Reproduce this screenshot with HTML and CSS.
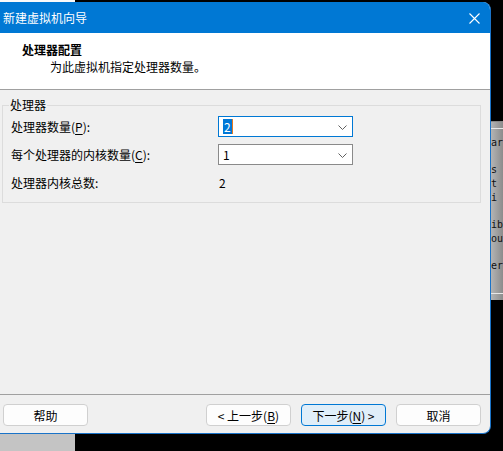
FILE: index.html
```html
<!DOCTYPE html>
<html lang="zh-CN">
<head>
    <meta charset="UTF-8">
    <meta name="viewport" content="width=device-width, initial-scale=1.0">
    <title>新建虚拟机向导</title>
    <link rel="stylesheet" href="styles.css">
</head>
<body>
    <div class="desktop">
        <div class="dialog">
            <div class="titlebar">
                <span class="title">新建虚拟机向导</span>
                <svg class="close" width="11" height="11" viewBox="0 0 11 11">
                    <path d="M0.5 0.5 L10.5 10.5 M10.5 0.5 L0.5 10.5" stroke="#fff" stroke-width="1.1" fill="none"/>
                </svg>
            </div>

            <div class="header">
                <h1>处理器配置</h1>
                <p>为此虚拟机指定处理器数量。</p>
            </div>

            <div class="content">
                <fieldset class="group">
                    <legend>处理器</legend>
                    <div class="form-grid">
                        <label>处理器数量(<u>P</u>):</label>
                        <div class="combo focused">
                            <span class="value"><span class="selected">2</span><span class="caret"></span></span>
                            <svg class="arrow" width="9" height="5" viewBox="0 0 9 5"><path d="M0.5 0.5 L4.5 4.5 L8.5 0.5" stroke="#606060" fill="none"/></svg>
                        </div>

                        <label>每个处理器的内核数量(<u>C</u>):</label>
                        <div class="combo">
                            <span class="value">1</span>
                            <svg class="arrow" width="9" height="5" viewBox="0 0 9 5"><path d="M0.5 0.5 L4.5 4.5 L8.5 0.5" stroke="#606060" fill="none"/></svg>
                        </div>

                        <label>处理器内核总数:</label>
                        <span class="total">2</span>
                    </div>
                </fieldset>
            </div>

            <div class="footer">
                <button class="btn">帮助</button>
                <span class="spacer"></span>
                <button class="btn">&lt;&nbsp;上一步(<u>B</u>)</button>
                <button class="btn default">下一步(<u>N</u>)&nbsp;&gt;</button>
                <button class="btn">取消</button>
            </div>
        </div>

        <!-- window peeking out behind the dialog -->
        <div class="behind">
            <div class="behind-panel">
                <span>ar</span>
                <span class="gap">s</span>
                <span>t i</span>
                <span class="gap">ib</span>
                <span>ou</span>
                <span class="gap">er</span>
            </div>
        </div>
    </div>
</body>
</html>
```

FILE: styles.css
```css
body {
    margin: 0;
    font-family: "Noto Sans CJK SC", "Microsoft YaHei", sans-serif;
    font-size: 12px;
    background:
        linear-gradient(#fafafa 0 2px, #c4c4c4 2px) left top / 75px 100% no-repeat,
        #000;
    width: 503px;
    height: 451px;
    overflow: hidden;
}
.desktop {
    display: flex;
    align-items: flex-start;
}
.dialog {
    width: 491px;
    height: 431px;
    margin-top: 2px;
    background: #f0f0f0;
    border-right: 1px solid #1a73c8;
    border-bottom: 1px solid #1a73c8;
    border-radius: 0 8px 8px 0;
    overflow: hidden;
    display: flex;
    flex-direction: column;
}
.titlebar {
    height: 31px;
    background: #0078d4;
    color: #fff;
    display: flex;
    align-items: center;
    justify-content: space-between;
    padding: 0 10px 0 3px;
    font-size: 12px;
}
.close {
    margin-top: 1px;
}
.header {
    height: 57px;
    box-sizing: border-box;
    background: #fff;
    border-bottom: 1px solid #a0a0a0;
    padding-top: 9px;
}
.header h1 {
    margin: 0 0 0 22px;
    font-size: 12px;
    line-height: 16px;
    font-weight: bold;
}
.header p {
    margin: 1px 0 0 50px;
    line-height: 16px;
}
.content {
    flex: 1;
    padding: 7px 9px 0 2px;
    border-bottom: 1px solid #a0a0a0;
}
.group {
    margin: 0;
    padding: 0 8px 9px 8px;
    border: 1px solid #dcdcdc;
    min-width: 0;
}
.group legend {
    padding: 0 1px;
    margin-left: -2px;
    line-height: 16px;
    color: #000;
}
.form-grid {
    display: grid;
    grid-template-columns: 207px 135px;
    grid-auto-rows: 21px;
    row-gap: 7px;
    align-items: center;
    margin-top: 3px;
}
.form-grid label {
    line-height: 21px;
}
.form-grid u {
    text-underline-offset: 2px;
}
.combo {
    height: 21px;
    box-sizing: border-box;
    border: 1px solid #8a8a8a;
    background: #fff;
    display: flex;
    align-items: center;
    justify-content: space-between;
    padding: 0 5px 0 4px;
}
.combo.focused {
    border-color: #0078d4;
}
.value {
    display: flex;
    align-items: center;
    color: #000;
}
.selected {
    background: #0078d7;
    color: #fff;
    padding: 0 1px;
    line-height: 15px;
}
.caret {
    width: 1px;
    height: 15px;
    background: #e87a1e;
}
.arrow {
    margin-top: 1px;
}
.total {
    padding-left: 1px;
    line-height: 21px;
}
.footer {
    height: 38px;
    display: flex;
    align-items: flex-start;
    gap: 10px;
    padding: 9px 9px 0 3px;
    box-sizing: border-box;
}
.spacer {
    flex: 1;
}
.btn {
    width: 85px;
    height: 22px;
    font: inherit;
    color: #000;
    background: #fdfdfd;
    border: 1px solid #d0d0d0;
    border-radius: 4px;
    padding: 0;
}
.btn.default {
    background: #e0eef9;
    border-color: #0078d4;
}
.btn u {
    text-underline-offset: 2px;
}
.behind {
    flex: 1;
    padding-top: 121px;
}
.behind-panel {
    height: 179px;
    background: linear-gradient(to right, #b4b4b4, #8c8c8c);
    border-top: 1px solid #888;
    box-sizing: border-box;
    display: flex;
    flex-direction: column;
    font-family: "DejaVu Sans Mono", monospace;
    font-size: 10px;
    line-height: 14px;
    color: #111;
    padding-top: 14px;
    position: relative;
    overflow: hidden;
}
.behind-panel::before,
.behind-panel::after {
    content: "";
    position: absolute;
    left: 0;
    right: 0;
    height: 1px;
    background: #e8e8e8;
}
.behind-panel::before {
    top: 6px;
}
.behind-panel::after {
    bottom: 6px;
}
.behind-panel .gap {
    margin-top: 13px;
}
```
